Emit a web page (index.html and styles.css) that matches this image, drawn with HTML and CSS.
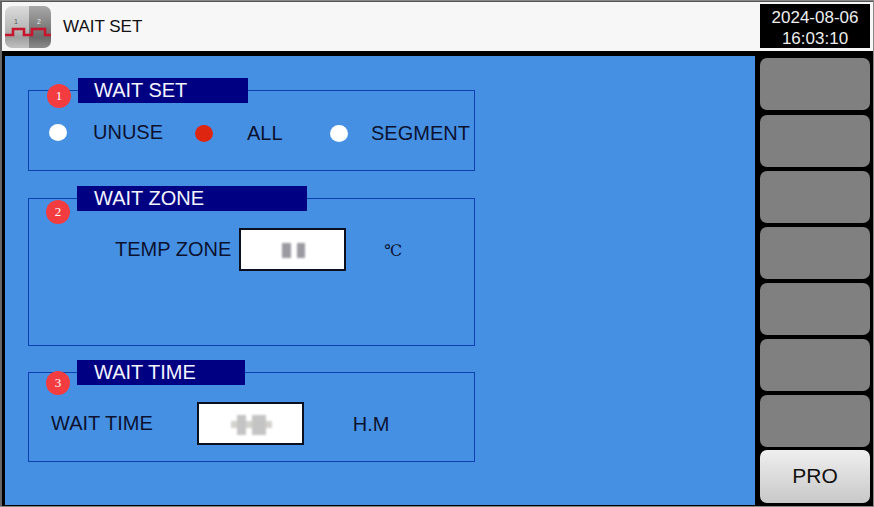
FILE: index.html
```html
<!DOCTYPE html>
<html lang="en">
<head>
    <meta charset="UTF-8">
    <meta name="viewport" content="width=device-width, initial-scale=1.0">
    <title>WAIT SET</title>
    <link rel="stylesheet" href="styles.css">
</head>
<body>
    <div class="screen">
        <div class="topbar">
            <svg class="logo" width="46" height="42" viewBox="0 0 46 42">
                <defs>
                    <linearGradient id="logoLeft" x1="0" y1="0" x2="0" y2="1">
                        <stop offset="0" stop-color="#dcdcdc"/>
                        <stop offset="0.6" stop-color="#b4b4b4"/>
                        <stop offset="0.75" stop-color="#a0a0a0"/>
                        <stop offset="1" stop-color="#c0c0c0"/>
                    </linearGradient>
                    <linearGradient id="logoRight" x1="0" y1="0" x2="0" y2="1">
                        <stop offset="0" stop-color="#a8a8a8"/>
                        <stop offset="0.6" stop-color="#767676"/>
                        <stop offset="0.75" stop-color="#6a6a6a"/>
                        <stop offset="1" stop-color="#8c8c8c"/>
                    </linearGradient>
                    <clipPath id="logoClip"><rect width="46" height="42" rx="7"/></clipPath>
                </defs>
                <g clip-path="url(#logoClip)">
                    <rect width="24" height="42" fill="url(#logoLeft)"/>
                    <rect x="24" width="22" height="42" fill="url(#logoRight)"/>
                    <text x="9" y="18" class="logo-num num-dark">1</text>
                    <text x="32" y="18" class="logo-num">2</text>
                    <path d="M0 29H8V23H19V29H27V23H40V29H46" fill="none" stroke="#c8142c" stroke-width="2.6"/>
                </g>
            </svg>
            <span class="page-title">WAIT SET</span>
            <div class="clock">
                <div>2024-08-06</div>
                <div>16:03:10</div>
            </div>
        </div>

        <div class="main">
            <div class="panel">
                <div class="group group-set">
                    <span class="badge">1</span>
                    <div class="group-title title-set">WAIT SET</div>
                    <div class="radios">
                        <span class="radio first"></span>
                        <span class="radio-label label-unuse">UNUSE</span>
                        <span class="radio on"></span>
                        <span class="radio-label label-all">ALL</span>
                        <span class="radio"></span>
                        <span class="radio-label label-seg">SEGMENT</span>
                    </div>
                </div>

                <div class="group group-zone">
                    <span class="badge">2</span>
                    <div class="group-title title-zone">WAIT ZONE</div>
                    <div class="field-row zone-row">
                        <span>TEMP ZONE</span>
                        <div class="value">
                            <span class="blur blur-a"></span>
                            <span class="blur blur-b"></span>
                        </div>
                        <span class="unit-c">&#8451;</span>
                    </div>
                </div>

                <div class="group group-time">
                    <span class="badge">3</span>
                    <div class="group-title title-time">WAIT TIME</div>
                    <div class="field-row time-row">
                        <span>WAIT TIME</span>
                        <div class="value">
                            <span class="blur blur-c"></span>
                            <span class="blur blur-d"></span>
                            <span class="blur blur-e"></span>
                        </div>
                        <span class="unit-hm">H.M</span>
                    </div>
                </div>
            </div>

            <div class="side">
                <div class="side-btn first"></div>
                <div class="side-btn"></div>
                <div class="side-btn"></div>
                <div class="side-btn"></div>
                <div class="side-btn"></div>
                <div class="side-btn"></div>
                <div class="side-btn"></div>
                <div class="side-btn pro">PRO</div>
            </div>
        </div>
    </div>
</body>
</html>
```

FILE: styles.css
```css
* {
    margin: 0;
    padding: 0;
    box-sizing: border-box;
    font-family: 'Liberation Sans', Arial, sans-serif;
}
body {
    background-color: #888;
    overflow: hidden;
}
.screen {
    width: 873px;
    height: 505px;
    margin-top: 1px;
    border-top: 1px solid #555;
    border-left: 2px solid #666;
    background-color: #000;
    display: flex;
    flex-direction: column;
}
.topbar {
    height: 49px;
    background-color: #f7f7f7;
    display: flex;
    align-items: center;
    padding: 0 3px;
    flex-shrink: 0;
}
.logo {
    flex-shrink: 0;
}
.logo-num {
    font-size: 7px;
    fill: #eee;
}
.logo-num.num-dark {
    fill: #555;
}
.page-title {
    font-size: 17px;
    color: #111;
    margin: 1px 0 0 12px;
}
.clock {
    margin-left: auto;
    margin-bottom: 1px;
    width: 110px;
    height: 44px;
    background-color: #000;
    color: #eee;
    font-size: 17px;
    line-height: 21px;
    text-align: center;
    padding-top: 3px;
}
.main {
    flex: 1;
    display: flex;
    padding: 5px 3px 1px 3px;
    gap: 5px;
}
.panel {
    width: 750px;
    background-color: #4690e4;
    padding: 34px 0 0 23px;
}
.group {
    position: relative;
    width: 447px;
    border: 1px solid #0c3fb0;
}
.group-set {
    height: 81px;
}
.group-zone {
    height: 148px;
    margin-top: 27px;
}
.group-time {
    height: 90px;
    margin-top: 26px;
}
.group-title {
    position: absolute;
    top: -13px;
    left: 48px;
    height: 25px;
    line-height: 25px;
    background-color: #000082;
    color: #f4f4ff;
    font-size: 20px;
    padding-left: 17px;
}
.title-set {
    left: 49px;
    width: 170px;
    padding-left: 16px;
}
.title-zone {
    width: 230px;
}
.title-time {
    width: 168px;
}
.badge {
    position: absolute;
    left: 18px;
    top: -7px;
    width: 24px;
    height: 24px;
    border-radius: 50%;
    background-color: #f23c40;
    color: #fff;
    font-family: 'Liberation Serif', serif;
    font-size: 13px;
    line-height: 24px;
    text-align: center;
    z-index: 1;
}
.group-zone .badge {
    left: 17px;
    top: 1px;
}
.group-time .badge {
    left: 17px;
    top: -2px;
}
.radios {
    display: flex;
    align-items: center;
    padding: 31px 0 0 20px;
    font-size: 20px;
    color: #0b1230;
}
.radio {
    width: 18px;
    height: 17px;
    border-radius: 50%;
    background-color: #fff;
    flex-shrink: 0;
}
.radio.first {
    margin-top: -2px;
}
.radio.on {
    background-color: #dd2510;
}
.radio-label {
    line-height: 24px;
}
.label-unuse {
    margin: -3px 0 0 26px;
    width: 102px;
}
.label-all {
    margin: -1px 0 0 34px;
    width: 83px;
}
.label-seg {
    margin: -1px 0 0 23px;
}
.field-row {
    display: flex;
    align-items: center;
    font-size: 20px;
    color: #0b1230;
}
.zone-row {
    padding: 29px 0 0 86px;
}
.time-row {
    padding: 29px 0 0 22px;
}
.value {
    width: 107px;
    height: 43px;
    background-color: #fff;
    border: 2px solid #0a1020;
    position: relative;
    flex-shrink: 0;
}
.zone-row .value {
    margin-left: 8px;
}
.time-row .value {
    margin-left: 44px;
}
.blur {
    position: absolute;
    filter: blur(1.2px);
}
.blur-a,
.blur-b {
    top: 13px;
    height: 15px;
    background-color: #9a9aa0;
}
.blur-a {
    left: 41px;
    width: 9px;
}
.blur-b {
    left: 56px;
    width: 8px;
}
.blur-c {
    left: 32px;
    top: 17px;
    width: 41px;
    height: 7px;
    background-color: #d4d2ce;
}
.blur-d,
.blur-e {
    top: 11px;
    height: 20px;
    background-color: #c4c4c4;
}
.blur-d {
    left: 38px;
    width: 9px;
}
.blur-e {
    left: 53px;
    width: 14px;
}
.unit-c {
    margin-left: 38px;
    font-family: 'DejaVu Serif', 'Liberation Serif', serif;
    font-size: 16px;
    font-weight: 300;
    margin-top: 2px;
}
.unit-hm {
    margin-left: 49px;
    margin-top: 2px;
}
.side {
    flex: 1;
    display: flex;
    flex-direction: column;
    gap: 4px;
    padding: 2px 0 0 0;
}
.side-btn {
    width: 110px;
    height: 52px;
    flex-shrink: 0;
    background-color: #808080;
    border-radius: 7px;
}
.side-btn.first {
    margin-bottom: 1px;
}
.side-btn.pro {
    height: 53px;
    margin-top: -1px;
    background: linear-gradient(#efefef, #c8c8c8);
    color: #111;
    font-size: 21px;
    line-height: 52px;
    text-align: center;
}
```
